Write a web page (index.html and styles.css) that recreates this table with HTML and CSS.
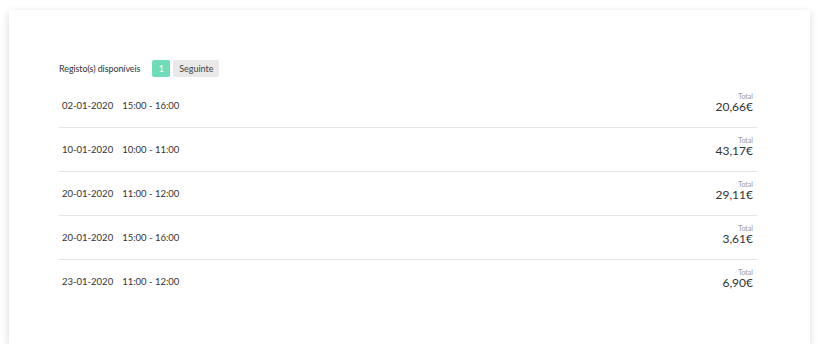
FILE: index.html
```html
<!DOCTYPE html>
<html lang="pt">
<head>
<meta charset="utf-8">
<link rel="stylesheet" href="styles.css">
</head>
<body>
<div class="card">
  <div class="toolbar">
    <span class="label">Registo(s) disponíveis</span>
    <span class="page active">1</span>
    <span class="page next">Seguinte</span>
  </div>
  <div class="list">
    <div class="row">
      <div class="when"><span class="date">02-01-2020</span><span class="time">15:00 - 16:00</span></div>
      <div class="total"><span class="t-label">Total</span><span class="t-value">20,66€</span></div>
    </div>
    <div class="row">
      <div class="when"><span class="date">10-01-2020</span><span class="time">10:00 - 11:00</span></div>
      <div class="total"><span class="t-label">Total</span><span class="t-value">43,17€</span></div>
    </div>
    <div class="row">
      <div class="when"><span class="date">20-01-2020</span><span class="time">11:00 - 12:00</span></div>
      <div class="total"><span class="t-label">Total</span><span class="t-value">29,11€</span></div>
    </div>
    <div class="row">
      <div class="when"><span class="date">20-01-2020</span><span class="time">15:00 - 16:00</span></div>
      <div class="total"><span class="t-label">Total</span><span class="t-value">3,61€</span></div>
    </div>
    <div class="row last">
      <div class="when"><span class="date">23-01-2020</span><span class="time">11:00 - 12:00</span></div>
      <div class="total"><span class="t-label">Total</span><span class="t-value">6,90€</span></div>
    </div>
  </div>
</div>
</body>
</html>
```

FILE: styles.css
```css
html, body {
  margin: 0;
  padding: 0;
  background: #ffffff;
}
body {
  font-family: Lato, "Open Sans", sans-serif;
  color: #333;
  padding: 10px 0 0 9px;
}
.card {
  box-sizing: border-box;
  width: 801px;
  height: 334px;
  background: #fff;
  box-shadow: 0 3px 8px rgba(30, 40, 70, 0.18);
  padding: 50px 53px 0 50px;
}
.toolbar {
  display: flex;
  align-items: center;
  height: 17px;
  font-size: 9px;
}
.label {
  margin-right: 12px;
  letter-spacing: -0.1px;
}
.page {
  display: flex;
  align-items: center;
  justify-content: center;
  height: 17px;
  border-radius: 2px;
  font-size: 9px;
}
.active {
  width: 18px;
  background: #6fdcb7;
  color: #fff;
  margin-right: 3px;
}
.next {
  width: 46px;
  background: #e9e9e9;
  color: #444;
}
.list {
  margin-top: 7px;
}
.row {
  display: flex;
  align-items: center;
  justify-content: space-between;
  height: 43px;
  border-bottom: 1px solid #e6e6e6;
  padding: 0 4px 0 3px;
}
.row.last {
  border-bottom: none;
}
.when {
  font-size: 9.5px;
  display: flex;
  gap: 9px;
}
.total {
  display: flex;
  flex-direction: column;
  align-items: flex-end;
  margin-top: -6px;
}
.t-label {
  font-size: 7px;
  color: #999;
  line-height: 8px;
}
.t-value {
  font-size: 12px;
  line-height: 13px;
  color: #333;
}
```
